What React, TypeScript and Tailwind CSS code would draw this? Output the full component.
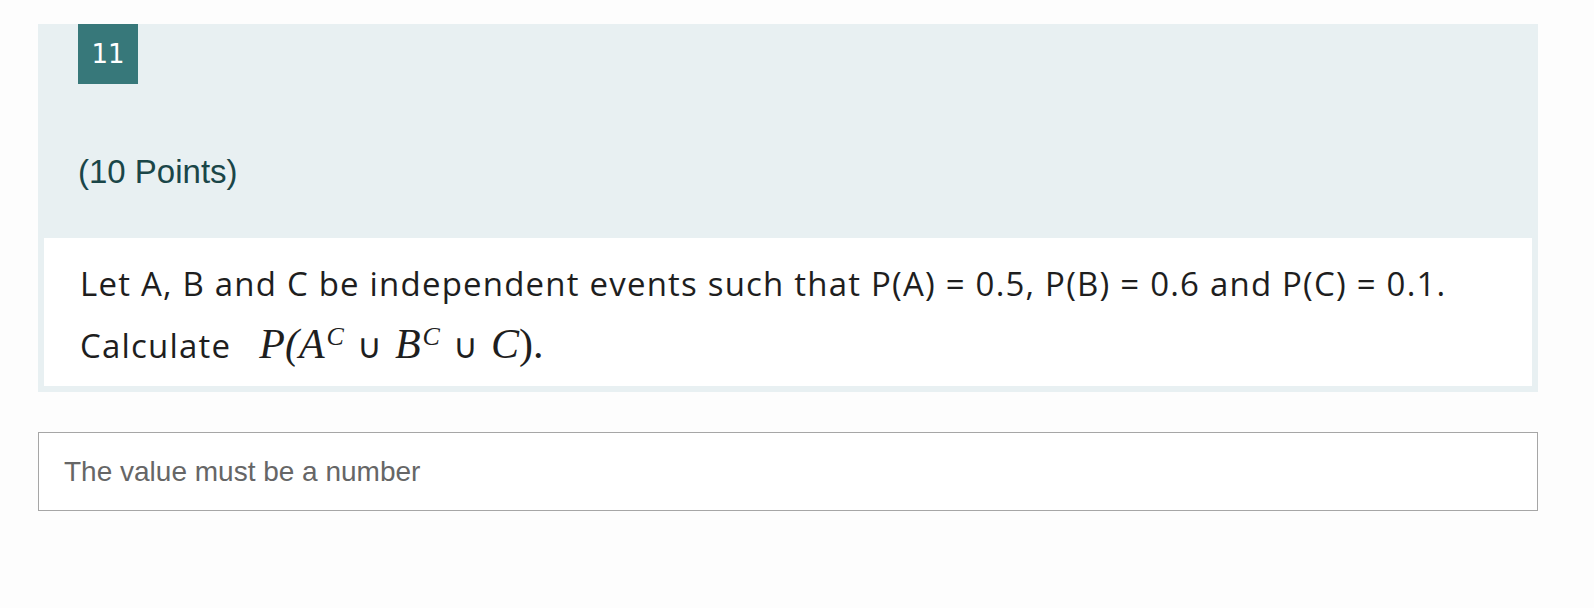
import React from 'react';

const App = () => {
  return (
    <div className="min-h-[608px] bg-[#fdfdfd] pl-[38px] pt-[24px] pr-[56px]">
      <div className="bg-[#e8f0f2] px-[6px] pb-[6px]">
        <div className="pl-[34px]">
          <div
            className="w-[60px] h-[60px] bg-[#37787a] text-white flex items-center justify-center text-[26px]"
            style={{ fontFamily: '"DejaVu Sans", sans-serif' }}
          >
            11
          </div>
          <div
            className="pt-[68px] pb-[46px] text-[33px] leading-[40px] text-[#1a4648]"
            style={{ fontFamily: '"Liberation Sans", sans-serif' }}
          >
            (10 Points)
          </div>
        </div>
        <div
          className="bg-white pl-[36px] pt-[16px] pb-[9px] text-[#1e1e1e] text-[33px] tracking-[1.2px] leading-[60px]"
          style={{ fontFamily: '"Open Sans", sans-serif' }}
        >
          <p>Let A, B and C be independent events such that P(A) = 0.5, P(B) = 0.6 and P(C) = 0.1.</p>
          <p>
            Calculate
            <span
              className="ml-[28px] italic text-[42px] tracking-normal"
              style={{ fontFamily: '"Liberation Serif", serif' }}
            >
              P(A<sup className="text-[26px] ml-[2px]">C</sup>
              <span className="not-italic mx-[13px] text-[34px]">∪</span>B<sup className="text-[26px] ml-[2px]">C</sup>
              <span className="not-italic mx-[13px] text-[34px]">∪</span>C<span className="not-italic">).</span>
            </span>
          </p>
        </div>
      </div>
      <div className="mt-[40px] h-[79px] border border-[#a6a6a6] bg-white flex items-center pl-[25px]">
        <span
          className="text-[28px] text-[#666666]"
          style={{ fontFamily: '"Liberation Sans", sans-serif' }}
        >
          The value must be a number
        </span>
      </div>
    </div>
  );
};

export default App;
